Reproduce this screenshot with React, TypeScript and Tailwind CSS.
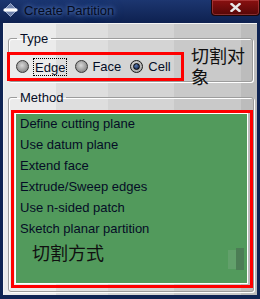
import React from "react";

const methods = [
  "Define cutting plane",
  "Use datum plane",
  "Extend face",
  "Extrude/Sweep edges",
  "Use n-sided patch",
  "Sketch planar partition",
];

function Radio({ checked }: { checked?: boolean }) {
  return (
    <span
      className={`w-[13px] h-[13px] rounded-full border flex items-center justify-center shrink-0 ${
        checked
          ? "border-[#1a1a1a] bg-[radial-gradient(circle_at_45%_40%,#eeeeee,#8a8a8a)]"
          : "border-[#3a3a3a] bg-[radial-gradient(circle_at_45%_40%,#d8d8d8,#6e6e6e)]"
      }`}
    >
      {checked && (
        <span className="w-[7px] h-[7px] rounded-full bg-[radial-gradient(circle_at_40%_35%,#5a7ab0,#0a1a40)] border border-black" />
      )}
    </span>
  );
}

function AppIcon() {
  return (
    <svg width="15" height="14" viewBox="0 0 15 14">
      <path d="M7.5 0.5 L13 6 L2 6 Z" fill="#6f82ad" stroke="#b8c4de" strokeWidth="0.8" />
      <path d="M2 8 L13 8 L7.5 13.5 Z" fill="#6f82ad" stroke="#b8c4de" strokeWidth="0.8" />
      <rect x="0.5" y="5.5" width="14" height="3" rx="1.2" fill="#ffffff" />
    </svg>
  );
}

export default function App() {
  return (
    <div
      className="w-[260px] h-[299px] bg-[#0f2453] flex flex-col overflow-hidden"
      style={{ fontFamily: '"Liberation Sans", Arial, sans-serif' }}
    >
      {/* title bar */}
      <div className="h-[23px] flex items-start bg-[linear-gradient(to_bottom,#1c3670,#0e2150)] shrink-0">
        <div className="ml-[3px] mt-[3px]">
          <AppIcon />
        </div>
        <div className="ml-[6px] mt-[3px] text-[13px] leading-[15px] text-[#050b20] [text-shadow:0_0_4px_rgba(110,150,220,0.9),0_0_10px_rgba(90,130,210,0.7)]">
          Create Partition
        </div>
        <div className="ml-auto w-[49px] h-[16px] rounded-b-[4px] border border-t-0 border-[#1e0606] bg-[linear-gradient(to_bottom,#8a1010,#560707)] shadow-[inset_0_0_0_1px_rgba(230,120,120,0.35)] flex items-center justify-center">
          <svg width="11" height="9" viewBox="0 0 11 9">
            <path d="M1.5 1 L9.5 8 M9.5 1 L1.5 8" stroke="#e8e8e8" strokeWidth="2.4" strokeLinecap="square" />
          </svg>
        </div>
      </div>

      {/* client area */}
      <div className="mx-[3px] mb-[4px] flex-1 px-[4px] border-t border-l border-[#f4f4f4] bg-[linear-gradient(to_right,#ebebeb_0px,#ebebeb_52px,#dedede_52px,#dedede_104px,#d4d4d4_104px,#d4d4d4_170px,#c9c9c9_170px,#c9c9c9_237px,#bcbcbc_237px)] text-[13px] text-[#050d26]">
        {/* Type group */}
        <fieldset className="mt-[7px] w-[245px] h-[51px] border border-[#9c9c9c] rounded-[3px] shadow-[inset_1px_1px_0_#ffffff,1px_1px_0_#ffffff]">
          <legend className="ml-[8px] px-[3px] leading-[15px]">Type</legend>
          <div className="flex items-start">
            <div className="-ml-[2px] mt-[6px] w-[177px] h-[29px] border-[3px] border-[#ff0000] flex items-center pl-[6px]">
              <Radio />
              <span className="ml-[4px] px-[1px] h-[18px] leading-[17px] border border-dotted border-black">Edge</span>
              <span className="ml-[8px]"><Radio /></span>
              <span className="ml-[4px] leading-[17px]">Face</span>
              <span className="ml-[9px]"><Radio checked /></span>
              <span className="ml-[5px] leading-[17px]">Cell</span>
            </div>
            <div
              className="ml-[7px] -mt-[1px] w-[58px] h-[20px] text-[18px] leading-[21px] text-[#101010]"
              style={{ fontFamily: '"Noto Sans CJK SC", sans-serif' }}
            >
              切割对象
            </div>
          </div>
        </fieldset>

        {/* Method group */}
        <fieldset className="mt-[8px] w-[245px] h-[202px] border border-[#9c9c9c] rounded-[3px] shadow-[inset_1px_1px_0_#ffffff,1px_1px_0_#ffffff]">
          <legend className="ml-[8px] px-[3px] leading-[15px]">Method</legend>
          <div className="ml-[2px] mt-[5px] w-[242px] h-[178px] border-[3px] border-[#ff0000]">
            <div className="ml-[1px] w-[233px] h-[171px] border border-white bg-[#529a5c] overflow-hidden">
              <div className="-mt-px">
                {methods.map((m) => (
                  <div key={m} className="h-[21px] leading-[21px] pl-[4px] whitespace-nowrap">
                    {m}
                  </div>
                ))}
              </div>
              <div className="flex items-start">
                <div
                  className="ml-[16px] mt-[3px] text-[18px] leading-[21px] text-[#101010]"
                  style={{ fontFamily: '"Noto Sans CJK SC", sans-serif' }}
                >
                  切割方式
                </div>
                <div className="ml-auto mr-[3px] mt-[9px] flex items-start">
                  <div className="mt-[2px] w-[8px] h-[19px] bg-[#62a06b]" />
                  <div className="w-[8px] h-[22px] bg-[#4c7d55]" />
                </div>
              </div>
            </div>
          </div>
        </fieldset>
      </div>
    </div>
  );
}
